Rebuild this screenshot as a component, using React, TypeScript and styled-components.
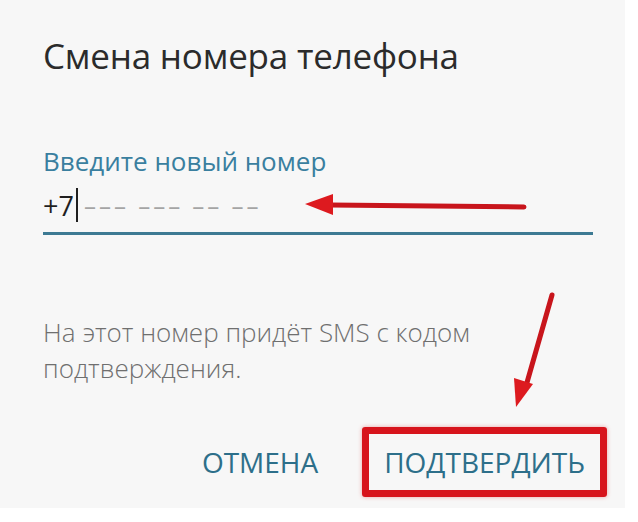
import React from "react";
import styled, { createGlobalStyle } from "styled-components";

const GlobalStyle = createGlobalStyle`
  html, body {
    margin: 0;
    padding: 0;
    background: #ffffff;
    font-family: "Open Sans", "Noto Sans", sans-serif;
  }
`;

const Page = styled.div`
  position: relative;
  width: 638px;
  height: 522px;
  overflow: hidden;
`;

const Dialog = styled.div`
  width: 625px;
  height: 508px;
  box-sizing: border-box;
  background: #f7f7f7;
  padding: 36px 18px 0 43px;
  display: flex;
  flex-direction: column;
`;

const Title = styled.h1`
  margin: 0;
  font-size: 35px;
  font-weight: 400;
  color: #2b2b2b;
  line-height: 40px;
  letter-spacing: -0.2px;
`;

const Field = styled.div`
  margin-top: 70px;
  width: 550px;
  border-bottom: 3px solid #3d7a93;
  padding-bottom: 12px;
`;

const Label = styled.div`
  font-size: 26px;
  color: #3a7f9f;
  line-height: 30px;
`;

const InputRow = styled.div`
  display: flex;
  align-items: center;
  margin-top: 14px;
  height: 30px;
  font-size: 27px;
`;

const Value = styled.span`
  color: #1f1f1f;
`;

const Caret = styled.span`
  display: inline-block;
  width: 2px;
  height: 34px;
  background: #1f1f1f;
  margin: 0 6px 0 2px;
`;

const Mask = styled.span`
  color: #a4a4a4;
  font-size: 24px;
  letter-spacing: 3px;
`;

const Hint = styled.p`
  margin: 79px 0 0;
  font-size: 26px;
  font-weight: 300;
  line-height: 36px;
  color: #6f6f6f;
  width: 480px;
`;

const Actions = styled.div`
  margin-top: 41px;
  display: flex;
  justify-content: flex-end;
  align-items: center;
  gap: 44px;
`;

const TextButton = styled.button`
  border: none;
  background: transparent;
  padding: 0;
  font-family: inherit;
  font-size: 28px;
  line-height: 38px;
  font-weight: 400;
  color: #2d6f8a;
  cursor: pointer;
`;

const Highlight = styled.div`
  border: 7px solid #d7141c;
  border-radius: 3px;
  padding: 9px 15px;
  box-shadow: 0 0 4px rgba(220, 40, 40, 0.4);
`;

const Annotations = styled.svg`
  position: absolute;
  left: 0;
  top: 0;
  pointer-events: none;
`;

export default function App() {
  return (
    <Page>
      <GlobalStyle />
      <Dialog>
        <Title>Смена номера телефона</Title>

        <Field>
          <Label>Введите новый номер</Label>
          <InputRow>
            <Value>+7</Value>
            <Caret />
            <Mask>––– ––– –– ––</Mask>
          </InputRow>
        </Field>

        <Hint>На этот номер придёт SMS с кодом подтверждения.</Hint>

        <Actions>
          <TextButton>ОТМЕНА</TextButton>
          <Highlight>
            <TextButton>ПОДТВЕРДИТЬ</TextButton>
          </Highlight>
        </Actions>
      </Dialog>

      <Annotations width="638" height="522" viewBox="0 0 638 522">
        {/* horizontal arrow */}
        <line x1="524" y1="207" x2="330" y2="205" stroke="#c8151c" strokeWidth="5" strokeLinecap="round" />
        <polygon points="305,204 333,194 333,215" fill="#dd1a1f" />
        {/* vertical arrow */}
        <line x1="552" y1="295" x2="526" y2="386" stroke="#c8151c" strokeWidth="5" strokeLinecap="round" />
        <polygon points="516,407 514,378 533,384" fill="#dd1a1f" />
      </Annotations>
    </Page>
  );
}
